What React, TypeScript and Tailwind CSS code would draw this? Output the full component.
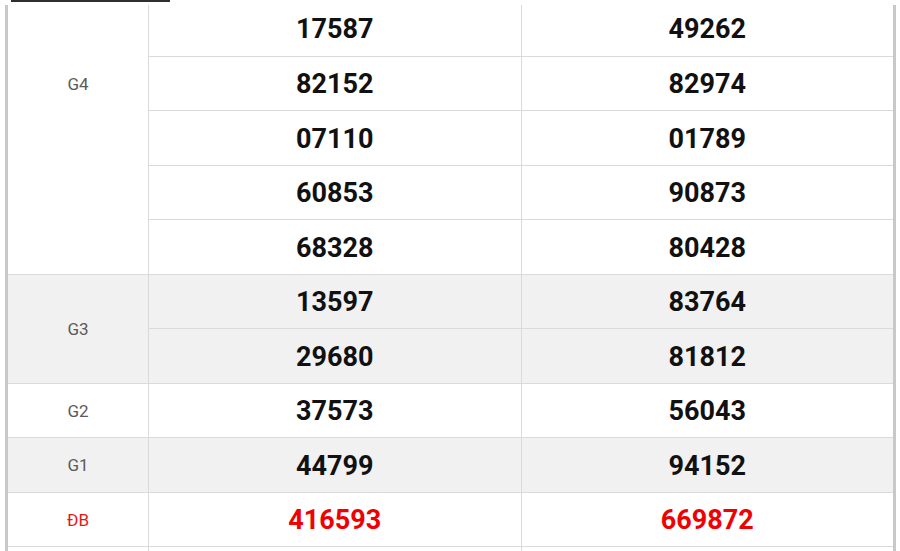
const groups: {
  label: string;
  gray: boolean;
  red?: boolean;
  labelPad?: string;
  rows: { h: string; a: string; b: string; shift?: string }[];
}[] = [
  {
    label: "G4",
    gray: false,
    labelPad: "items-start pt-[68px]",
    rows: [
      { h: "h-[52px]", a: "17587", b: "49262", shift: "pb-[2px]" },
      { h: "h-[54px]", a: "82152", b: "82974" },
      { h: "h-[55px]", a: "07110", b: "01789" },
      { h: "h-[54px]", a: "60853", b: "90873" },
      { h: "h-[55px]", a: "68328", b: "80428" },
    ],
  },
  {
    label: "G3",
    gray: true,
    rows: [
      { h: "h-[54px]", a: "13597", b: "83764" },
      { h: "h-[55px]", a: "29680", b: "81812" },
    ],
  },
  { label: "G2", gray: false, rows: [{ h: "h-[54px]", a: "37573", b: "56043" }] },
  { label: "G1", gray: true, rows: [{ h: "h-[55px]", a: "44799", b: "94152" }] },
  { label: "ĐB", gray: false, red: true, rows: [{ h: "h-[54px]", a: "416593", b: "669872" }] },
];

export default function App() {
  return (
    <div
      className="w-[900px] h-[551px] overflow-hidden bg-white"
      style={{ fontFamily: "Roboto, 'Liberation Sans', sans-serif" }}
    >
      <div className="h-[5px]">
        <div className="ml-[11px] w-[159px] h-[2px] bg-[#2f2f2f]" />
      </div>

      <div className="ml-[5px] w-[891px] border-l-[3px] border-r-[3px] border-[#c8c8c8]">
        {groups.map((g) => (
          <div key={g.label} className={`flex ${g.gray ? "bg-[#f1f1f1]" : "bg-white"}`}>
            <div
              className={`w-[141px] shrink-0 flex justify-center border-r border-b border-[#dadada] text-[17px] ${
                g.labelPad ?? "items-center"
              } ${g.red ? "text-[#e3191b]" : "text-[#5a5a5a]"}`}
            >
              <span className="leading-[22px]">{g.label}</span>
            </div>
            <div className="flex-1 flex flex-col">
              {g.rows.map((r) => (
                <div key={r.a} className={`flex ${r.h}`}>
                  {[r.a, r.b].map((n, i) => (
                    <div
                      key={i}
                      className={`flex-1 flex items-center justify-center border-b border-[#dadada] text-[27px] font-bold ${
                        i === 0 ? "border-r" : ""
                      } ${r.shift ?? "pt-[2px]"} ${g.red ? "text-[#f00000]" : "text-[#111111]"}`}
                    >
                      {n}
                    </div>
                  ))}
                </div>
              ))}
            </div>
          </div>
        ))}
        <div className="flex h-[20px]">
          <div className="w-[141px] border-r border-[#dadada]" />
          <div className="flex-1 border-r border-[#dadada]" />
          <div className="flex-1" />
        </div>
      </div>
    </div>
  );
}
